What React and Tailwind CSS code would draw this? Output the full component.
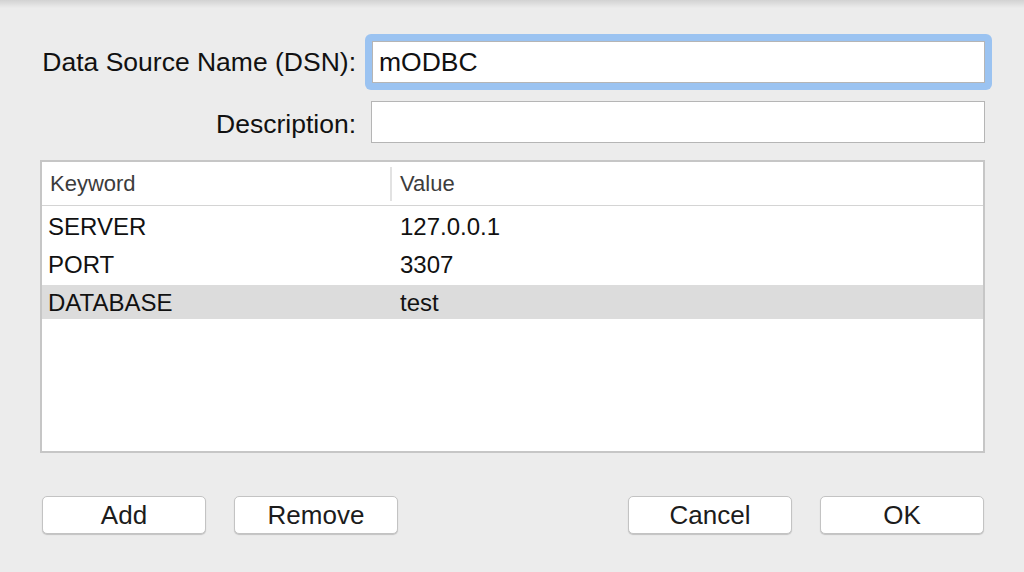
import React from 'react';

const rows = [
    { key: 'SERVER', value: '127.0.0.1' },
    { key: 'PORT', value: '3307' },
    { key: 'DATABASE', value: 'test', selected: true },
];

const MacButton = ({ children }) => (
    <button className="h-[38px] w-[164px] rounded-[5px] border border-[#c3c3c3] bg-white text-[26px] leading-none text-[#1c1c1c] shadow-[0_1px_1px_rgba(0,0,0,0.18)]">
        {children}
    </button>
);

const App = () => {
    return (
        <div
            className="relative h-[572px] w-[1024px] overflow-hidden bg-[#ececec] text-[#111]"
            style={{ fontFamily: '"Liberation Sans", Arial, sans-serif' }}
        >
            <div className="h-[8px] bg-gradient-to-b from-[#d2d2d2] to-[#ececec]" />

            <div className="flex flex-col pl-[40px] pr-[39px] pt-[33px]">
                {/* DSN */}
                <div className="flex items-center">
                    <label className="w-[316px] pt-[1px] text-right text-[26.5px] leading-none">Data Source Name (DSN):</label>
                    <div className="ml-[9px] -mr-[7px] -my-[7px] flex-1 rounded-[6px] bg-[#9bc3f1] p-[7px]">
                        <div className="flex h-[42px] items-center border border-[#b5b5b5] bg-white px-[6px] text-[26.5px] leading-none">
                            mODBC
                        </div>
                    </div>
                </div>

                {/* Description */}
                <div className="mt-[18px] flex items-center">
                    <label className="w-[316px] pt-[4px] text-right text-[26.5px] leading-none">Description:</label>
                    <div className="ml-[15px] h-[42px] flex-1 border border-[#b5b5b5] bg-white" />
                </div>

                {/* Keyword / value table */}
                <div className="mt-[17px] h-[293px] border-2 border-[#c6c6c6] bg-white">
                    <div className="flex h-[44px] items-center border-b border-[#d4d4d4] text-[22px] text-[#3c3c3c]">
                        <div className="w-[348px] pl-[8px]">Keyword</div>
                        <div className="h-[34px] w-[2px] bg-[#e2e2e2]" />
                        <div className="pl-[8px]">Value</div>
                    </div>
                    <div className="pt-[2px]">
                        {rows.map((row) => (
                            <div
                                key={row.key}
                                className={`flex h-[38px] items-center text-[24px] ${row.selected ? 'bg-[linear-gradient(to_bottom,transparent_0_1px,#dcdcdc_1px_35px,transparent_35px)]' : ''}`}
                            >
                                <div className="w-[351px] pl-[6px]">{row.key}</div>
                                <div className="pl-[7px]">{row.value}</div>
                            </div>
                        ))}
                    </div>
                </div>

                {/* Buttons */}
                <div className="mt-[43px] flex items-center pl-[2px]">
                    <div className="flex gap-[28px]">
                        <MacButton>Add</MacButton>
                        <MacButton>Remove</MacButton>
                    </div>
                    <div className="ml-auto flex gap-[28px] pr-[1px]">
                        <MacButton>Cancel</MacButton>
                        <MacButton>OK</MacButton>
                    </div>
                </div>
            </div>
        </div>
    );
};

export default App;
